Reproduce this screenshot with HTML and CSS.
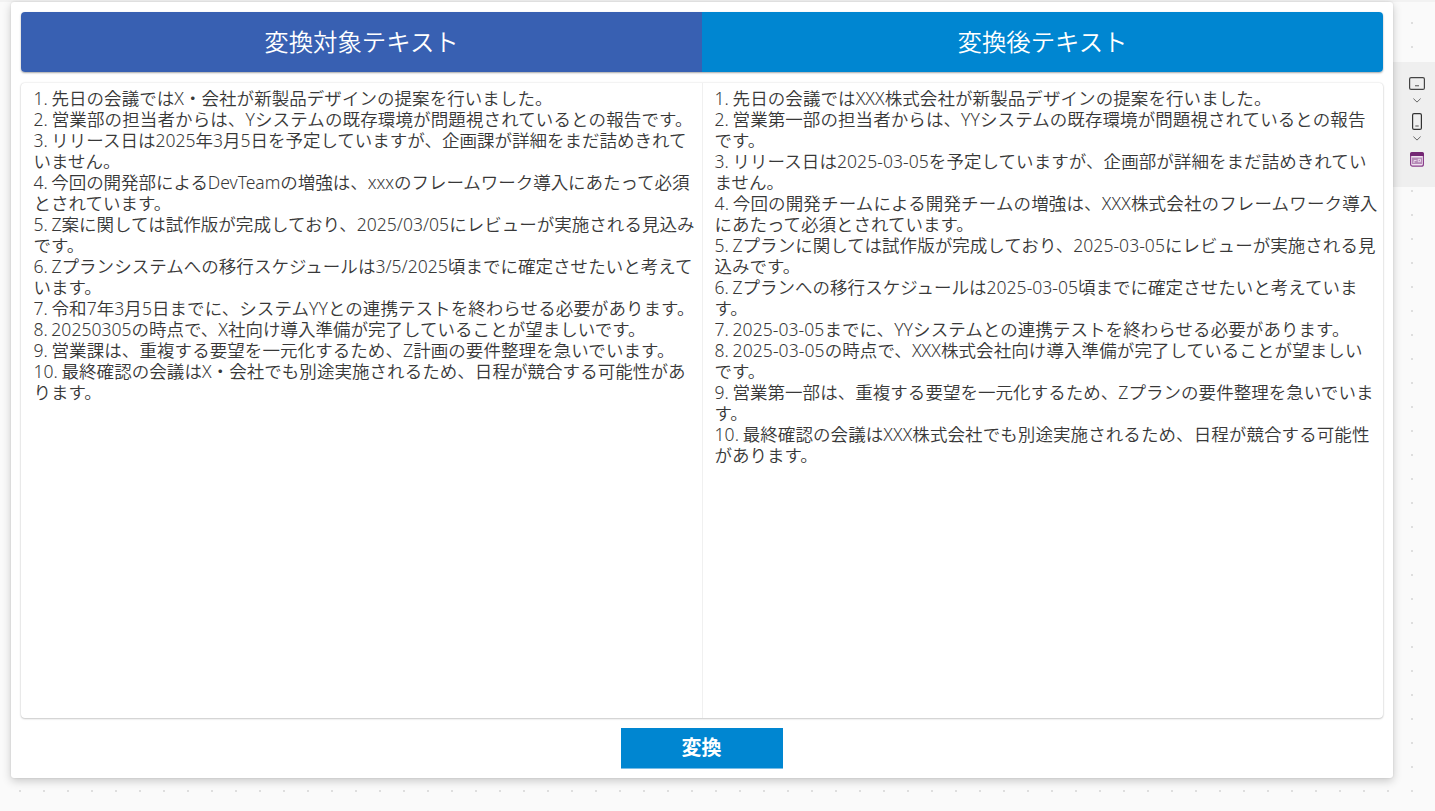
FILE: index.html
```html
<!DOCTYPE html>
<html lang="ja">
<head>
<meta charset="utf-8">
<title>テキスト変換</title>
<link rel="stylesheet" href="styles.css">
</head>
<body>
<main class="screen">
  <header class="headings">
    <h1 class="heading heading-source">変換対象テキスト</h1>
    <h1 class="heading heading-result">変換後テキスト</h1>
  </header>
  <section class="panes">
    <div class="pane">
      <p data-w="519">1. 先日の会議ではX・会社が新製品デザインの提案を行いました。</p>
      <p data-w="659">2. 営業部の担当者からは、Yシステムの既存環境が問題視されているとの報告です。</p>
      <p data-w="653">3. リリース日は2025年3月5日を予定していますが、企画課が詳細をまだ詰めきれて</p>
      <p>いません。</p>
      <p data-w="656">4. 今回の開発部によるDevTeamの増強は、xxxのフレームワーク導入にあたって必須</p>
      <p>とされています。</p>
      <p data-w="661">5. Z案に関しては試作版が完成しており、2025/03/05にレビューが実施される見込み</p>
      <p>です。</p>
      <p data-w="659">6. Zプランシステムへの移行スケジュールは3/5/2025頃までに確定させたいと考えて</p>
      <p>います。</p>
      <p data-w="661">7. 令和7年3月5日までに、システムYYとの連携テストを終わらせる必要があります。</p>
      <p data-w="612">8. 20250305の時点で、X社向け導入準備が完了していることが望ましいです。</p>
      <p data-w="641">9. 営業課は、重複する要望を一元化するため、Z計画の要件整理を急いでいます。</p>
      <p data-w="652">10. 最終確認の会議はX・会社でも別途実施されるため、日程が競合する可能性があ</p>
      <p>ります。</p>
    </div>
    <div class="pane pane-result">
      <p data-w="557">1. 先日の会議ではXXX株式会社が新製品デザインの提案を行いました。</p>
      <p data-w="651">2. 営業第一部の担当者からは、YYシステムの既存環境が問題視されているとの報告</p>
      <p>です。</p>
      <p data-w="652">3. リリース日は2025-03-05を予定していますが、企画部が詳細をまだ詰めきれてい</p>
      <p>ません。</p>
      <p data-w="663">4. 今回の開発チームによる開発チームの増強は、XXX株式会社のフレームワーク導入</p>
      <p>にあたって必須とされています。</p>
      <p data-w="661">5. Zプランに関しては試作版が完成しており、2025-03-05にレビューが実施される見</p>
      <p>込みです。</p>
      <p data-w="643">6. Zプランへの移行スケジュールは2025-03-05頃までに確定させたいと考えていま</p>
      <p>す。</p>
      <p data-w="635">7. 2025-03-05までに、YYシステムとの連携テストを終わらせる必要があります。</p>
      <p data-w="648">8. 2025-03-05の時点で、XXX株式会社向け導入準備が完了していることが望ましい</p>
      <p>です。</p>
      <p data-w="659">9. 営業第一部は、重複する要望を一元化するため、Zプランの要件整理を急いでいま</p>
      <p>す。</p>
      <p data-w="655">10. 最終確認の会議はXXX株式会社でも別途実施されるため、日程が競合する可能性</p>
      <p>があります。</p>
    </div>
  </section>
  <button class="convert">変換</button>
</main>
<aside class="tools">
  <svg class="tool tablet" viewBox="0 0 16 13" width="16" height="13"><rect x=".6" y=".6" width="14.8" height="11.8" rx="1.5" fill="none" stroke="#444" stroke-width="1.2"/><path d="M6 8.7h4" stroke="#777" stroke-width="1.3"/></svg>
  <svg class="tool chev" viewBox="0 0 8 5" width="8" height="5"><path d="M.4.6 4 4.1 7.6.6" fill="none" stroke="#666"/></svg>
  <svg class="tool phone" viewBox="0 0 10 17" width="10" height="17"><rect x=".6" y=".6" width="8.8" height="15.8" rx="1.5" fill="none" stroke="#333" stroke-width="1.2"/><path d="M3.3 13h3.4" stroke="#777" stroke-width="1.3"/></svg>
  <svg class="tool chev" viewBox="0 0 8 5" width="8" height="5"><path d="M.4.6 4 4.1 7.6.6" fill="none" stroke="#666"/></svg>
  <svg class="tool app" viewBox="0 0 14 15" width="14" height="15"><rect x=".6" y=".6" width="12.8" height="13.6" rx="2" fill="#efe3ef" stroke="#893d8b" stroke-width="1.2"/><path d="M2 0h10a2 2 0 0 1 2 2v2H0V2a2 2 0 0 1 2-2z" fill="#742774"/><path d="M2 5.5h10V12H2z" fill="#b68bb8"/><path d="M4 11V8.5h2.5M8.2 7.3h2.3v2.4H8.2z" fill="none" stroke="#eee0ef" stroke-width=".9"/></svg>
</aside>
<script src="fit.js"></script>
</body>
</html>
```
FILE: styles.css
```css
* { box-sizing: border-box; }
body {
  margin: 0;
  width: 1435px;
  height: 811px;
  overflow: hidden;
  display: flex;
  align-items: flex-start;
  padding: 2px 0 0 11px;
  font-family: "Noto Sans", "Noto Sans CJK JP", sans-serif;
  background:
    linear-gradient(#f2f2f2, #f2f2f2) 0 0 / 100% 2px no-repeat,
    linear-gradient(#fafafa, #fafafa) 0 0 / 12px 100% no-repeat,
    conic-gradient(from 270deg at 2px 2px, #dedede 90deg, transparent 0) 19px 22px / 24px 24px,
    #fafafa;
}
.screen {
  width: 1382px;
  height: 776px;
  padding: 10px;
  display: flex;
  flex-direction: column;
  align-items: center;
  background: #fff;
  border-radius: 3px;
  box-shadow: 0 3px 10px rgba(0, 0, 0, .2), 0 0 2px rgba(0, 0, 0, .12);
}
.headings, .panes {
  width: 1362px;
  display: grid;
  grid-template-columns: 681px 681px;
  border-radius: 4px;
  overflow: hidden;
}
.headings {
  height: 60px;
  flex: none;
  box-shadow: 0 1px 2px rgba(0, 0, 0, .35);
}
.heading {
  margin: 0;
  color: #fff;
  font-size: 24.4px;
  font-weight: 350;
  line-height: 60px;
  text-align: center;
  white-space: nowrap;
}
.heading-source { background: #3860b2; }
.heading-result { background: #0086d1; }
.panes {
  height: 635px;
  margin-top: 11px;
  flex: none;
  box-shadow: 0 0 2px rgba(0, 0, 0, .16), 0 1px 2px rgba(0, 0, 0, .18);
}
.pane {
  padding: 5px 0 0 12.5px;
  color: #383838;
  font-size: 17.5px;
  font-weight: 350;
  line-height: 21px;
  white-space: nowrap;
  word-spacing: -1px;
}
.pane-result {
  padding-left: 11.5px;
  border-left: 1px solid #f0f0f0;
}
.pane p {
  margin: 0;
  width: max-content;
  height: 21px;
}
.convert {
  width: 162px;
  height: 41px;
  margin-top: 10px;
  padding: 0 1px 3px 0;
  border: 0;
  border-bottom: 1px solid #79bde6;
  background: #0086d1;
  color: #fff;
  font: bold 20px "Noto Sans CJK JP", sans-serif;
  flex: none;
}
.tools {
  width: 42px;
  height: 125px;
  margin-top: 60px;
  padding: 15px 0 0 5px;
  display: flex;
  flex-direction: column;
  align-items: center;
  background: #efefef;
  position: relative;
  z-index: -1;
}
.tool { display: block; flex: none; }
.chev { margin-top: 8px; }
.phone { margin-top: 10px; }
.phone + .chev { margin-top: 6px; }
.app { margin-top: 11px; }
```
FILE: fit.js
```js
document.querySelectorAll('p[data-w]').forEach(function (p) {
  var diff = Number(p.dataset.w) - p.getBoundingClientRect().width;
  p.style.letterSpacing = diff / p.textContent.length + 'px';
});
```
